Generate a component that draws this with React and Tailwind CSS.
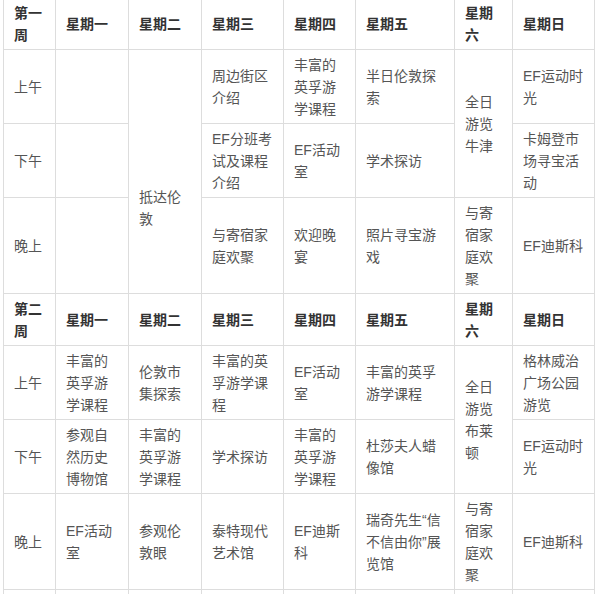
import React from 'react';

const days = ['星期一', '星期二', '星期三', '星期四', '星期五', '星期六', '星期日'];

// each cell: t = text, rs = rowSpan, shift = extra top padding
const week1 = [
    [{ t: '上午' }, { t: '' }, { t: '抵达伦敦', rs: 3, shift: true }, { t: '周边街区介绍' }, { t: '丰富的英孚游学课程' }, { t: '半日伦敦探索' }, { t: '全日游览牛津', rs: 2 }, { t: 'EF运动时光' }],
    [{ t: '下午' }, { t: '' }, { t: 'EF分班考试及课程介绍' }, { t: 'EF活动室' }, { t: '学术探访' }, { t: '卡姆登市场寻宝活动' }],
    [{ t: '晚上' }, { t: '' }, { t: '与寄宿家庭欢聚' }, { t: '欢迎晚宴' }, { t: '照片寻宝游戏' }, { t: '与寄宿家庭欢聚' }, { t: 'EF迪斯科' }],
];

const week2 = [
    [{ t: '上午' }, { t: '丰富的英孚游学课程' }, { t: '伦敦市集探索' }, { t: '丰富的英孚游学课程' }, { t: 'EF活动室' }, { t: '丰富的英孚游学课程' }, { t: '全日游览布莱顿', rs: 2 }, { t: '格林威治广场公园游览' }],
    [{ t: '下午' }, { t: '参观自然历史博物馆' }, { t: '丰富的英孚游学课程' }, { t: '学术探访' }, { t: '丰富的英孚游学课程' }, { t: '杜莎夫人蜡像馆' }, { t: 'EF运动时光' }],
    [{ t: '晚上' }, { t: 'EF活动室' }, { t: '参观伦敦眼' }, { t: '泰特现代艺术馆' }, { t: 'EF迪斯科' }, { t: '瑞奇先生“信不信由你”展览馆' }, { t: '与寄宿家庭欢聚' }, { t: 'EF迪斯科' }],
];

const cellBase = 'border border-[#dddddd] px-[10px] pb-[3px] align-middle text-left text-[14px] leading-[22px] break-all';

const HeaderRow = ({ label }) => (
    <tr>
        <td className={`${cellBase} pt-[4px] font-bold text-[#333333]`}>{label}</td>
        {days.map((d) => (
            <td key={d} className={`${cellBase} pt-[4px] font-bold text-[#333333]`}>{d}</td>
        ))}
    </tr>
);

const WeekRows = ({ rows }) =>
    rows.map((row, i) => (
        <tr key={i}>
            {row.map((c, j) => (
                <td
                    key={j}
                    rowSpan={c.rs || 1}
                    className={`${cellBase} ${c.shift ? 'pt-[76px]' : 'pt-[4px]'} text-[#555555]`}
                >
                    {c.t}
                </td>
            ))}
        </tr>
    ));

export default function App() {
    return (
        <div className="w-[600px] h-[594px] overflow-hidden bg-white font-['Liberation_Sans','Noto_Sans_CJK_SC',sans-serif]">
            <table className="border-collapse table-fixed w-[591px] ml-[3px] -mt-[3px]">
                <colgroup>
                    <col className="w-[52px]" />
                    <col className="w-[73px]" />
                    <col className="w-[73px]" />
                    <col className="w-[82px]" />
                    <col className="w-[72px]" />
                    <col className="w-[99px]" />
                    <col className="w-[58px]" />
                    <col className="w-[82px]" />
                </colgroup>
                <tbody>
                    <HeaderRow label="第一周" />
                    <WeekRows rows={week1} />
                    <HeaderRow label="第二周" />
                    <WeekRows rows={week2} />
                    {/* next row only peeks in at the bottom edge */}
                    <tr>
                        {[0, 1, 2, 3, 4, 5, 6, 7].map((k) => (
                            <td key={k} className={`${cellBase} pt-[4px] h-[52px]`}></td>
                        ))}
                    </tr>
                </tbody>
            </table>
        </div>
    );
}
